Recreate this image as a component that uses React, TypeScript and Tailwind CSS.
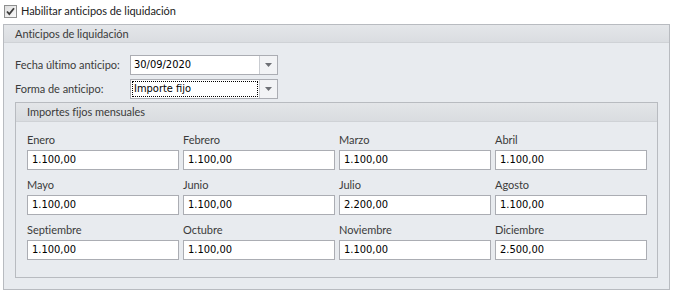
const months: [string, string][] = [
  ["Enero", "1.100,00"],
  ["Febrero", "1.100,00"],
  ["Marzo", "1.100,00"],
  ["Abril", "1.100,00"],
  ["Mayo", "1.100,00"],
  ["Junio", "1.100,00"],
  ["Julio", "2.200,00"],
  ["Agosto", "1.100,00"],
  ["Septiembre", "1.100,00"],
  ["Octubre", "1.100,00"],
  ["Noviembre", "1.100,00"],
  ["Diciembre", "2.500,00"],
];

const font = "font-['Lato',sans-serif] text-[11px] tracking-[-0.05px] whitespace-nowrap";
const ui = `${font} text-[#3b3b3b]`;
const mono = "font-['DejaVu_Sans_Condensed','DejaVu_Sans',sans-serif] text-[11px] text-black";

function Combo({ value, focused }: { value: string; focused?: boolean }) {
  return (
    <div className="flex h-[20px] w-[148px] shrink-0 border border-[#abadb3] bg-white">
      <div className="flex flex-1 items-center p-[1px]">
        <div
          className={
            "flex h-full w-full items-center px-[2px] " +
            (focused ? "outline outline-1 outline-dotted outline-black -outline-offset-1" : "")
          }
        >
          <span className={mono}>{value}</span>
        </div>
      </div>
      <div className="flex w-[18px] items-center justify-center border-l border-[#c9ccd1] bg-[#f2f3f5]">
        <svg width="7" height="4" viewBox="0 0 7 4">
          <path d="M0 0h7L3.5 4z" fill="#6e7075" />
        </svg>
      </div>
    </div>
  );
}

function Field({ label, value }: { label: string; value: string }) {
  return (
    <div className="flex flex-col">
      <div className={`${ui} h-4 leading-4 mb-[2px]`}>{label}</div>
      <div className="flex h-[20px] items-center border border-[#abadb3] bg-white px-[4px]">
        <span className={mono}>{value}</span>
      </div>
    </div>
  );
}

export default function App() {
  return (
    <div className="h-[293px] w-[674px] bg-white">
      <div className="flex h-[24px] items-center gap-[4px] pl-[4px] pb-[2px]">
        <svg width="13" height="13" viewBox="0 0 13 13">
          <defs>
            <linearGradient id="cb" x1="0" y1="0" x2="1" y2="1">
              <stop offset="0" stopColor="#dcdcdc" />
              <stop offset="1" stopColor="#fbfbfb" />
            </linearGradient>
          </defs>
          <rect x="0.5" y="0.5" width="12" height="12" fill="url(#cb)" stroke="#8e8f8f" />
          <path d="M3 6.5l2.3 2.6L10 3.2" fill="none" stroke="#3c3c3c" strokeWidth="1.8" />
        </svg>
        <span className={`${font} text-[#222]`}>Habilitar anticipos de liquidación</span>
      </div>

      <div className="ml-[3px] w-[667px] h-[266px] border border-[#b8bbc0] bg-[#e8ebef]">
        <div className={`${ui} h-[18px] leading-[17px] border-b border-[#cfd2d6] bg-gradient-to-b from-[#e4e6e9] to-[#dadde1] pl-[11px]`}>
          Anticipos de liquidación
        </div>
        <div className="px-[11px] pt-[12px]">
          <div className="flex items-center">
            <span className={`${ui} w-[115px] shrink-0`}>Fecha último anticipo:</span>
            <Combo value="30/09/2020" />
          </div>
          <div className="mt-[4px] flex items-center">
            <span className={`${ui} w-[115px] shrink-0`}>Forma de anticipo:</span>
            <Combo value="Importe fijo" focused />
          </div>

          <div className="mt-[3px] h-[176px] border border-[#b8bbc0] bg-[#e8ebef]">
            <div className={`${ui} h-[19px] leading-[18px] border-b border-[#cfd2d6] bg-gradient-to-b from-[#e3e5e8] to-[#d9dce0] pl-[11px]`}>
              Importes fijos mensuales
            </div>
            <div className="grid grid-cols-4 gap-x-[4px] gap-y-[7px] pl-[11px] pr-[10px] pt-[10px]">
              {months.map(([m, v]) => (
                <Field key={m} label={m} value={v} />
              ))}
            </div>
          </div>
        </div>
      </div>
    </div>
  );
}
